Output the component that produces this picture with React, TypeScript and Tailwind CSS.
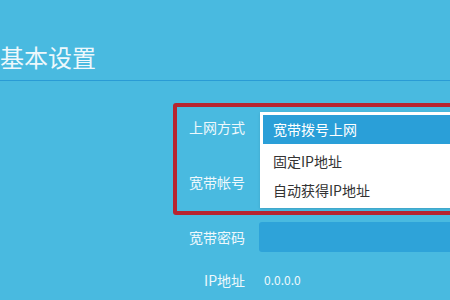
import React from 'react';

const font = { fontFamily: '"Noto Sans CJK SC", "Liberation Sans", sans-serif' };

const options = ['宽带拨号上网', '固定IP地址', '自动获得IP地址'];

export default function App() {
  return (
    <div
      className="w-[450px] h-[300px] overflow-hidden bg-[#49bae0] text-[#eef8fc]"
      style={font}
    >
      {/* Header */}
      <div className="h-[81px] border-b border-[#2a9bd5] pt-[41px]">
        <h1 className="text-[24px] leading-[32px] font-normal">基本设置</h1>
      </div>

      {/* Form */}
      <div className="ml-[173px] mt-[22px]">
        {/* highlighted block */}
        <div className="relative w-[300px] border-4 border-[#b62530] rounded-[3px]">
          <div className="flex h-[40px] items-center">
            <span className="w-[68px] shrink-0 text-right text-[14px] leading-[20px]">上网方式</span>
          </div>
          <div className="flex h-[64px] items-start pt-[25px]">
            <span className="w-[68px] shrink-0 text-right text-[14px] leading-[20px]">宽带帐号</span>
          </div>

          {/* open select menu */}
          <div className="absolute left-[83px] top-[5px] w-[220px] bg-white p-[3px] pr-0 shadow-sm">
            {options.map((o, i) => (
              <div
                key={o}
                className={`flex h-[29px] items-center pl-[10px] text-[14px] ${
                  i === 0 ? 'bg-[#2a9fd8] text-white' : 'text-[#333]'
                } ${i === 1 ? 'mt-[3px]' : ''}`}
              >
                {o}
              </div>
            ))}
          </div>
        </div>

        <div className="flex items-center h-[30px] mt-[7px]">
          <span className="w-[72px] shrink-0 text-right text-[14px] leading-[20px]">宽带密码</span>
          <div className="ml-[14px] h-[30px] w-[220px] shrink-0 rounded-[3px] bg-[#2ea3d9]" />
        </div>

        <div className="flex items-center h-[30px] mt-[13px]">
          <span className="w-[72px] shrink-0 text-right text-[14px] leading-[20px]">IP地址</span>
          <span className="ml-[19px] text-[12px]">0.0.0.0</span>
        </div>
      </div>
    </div>
  );
}
